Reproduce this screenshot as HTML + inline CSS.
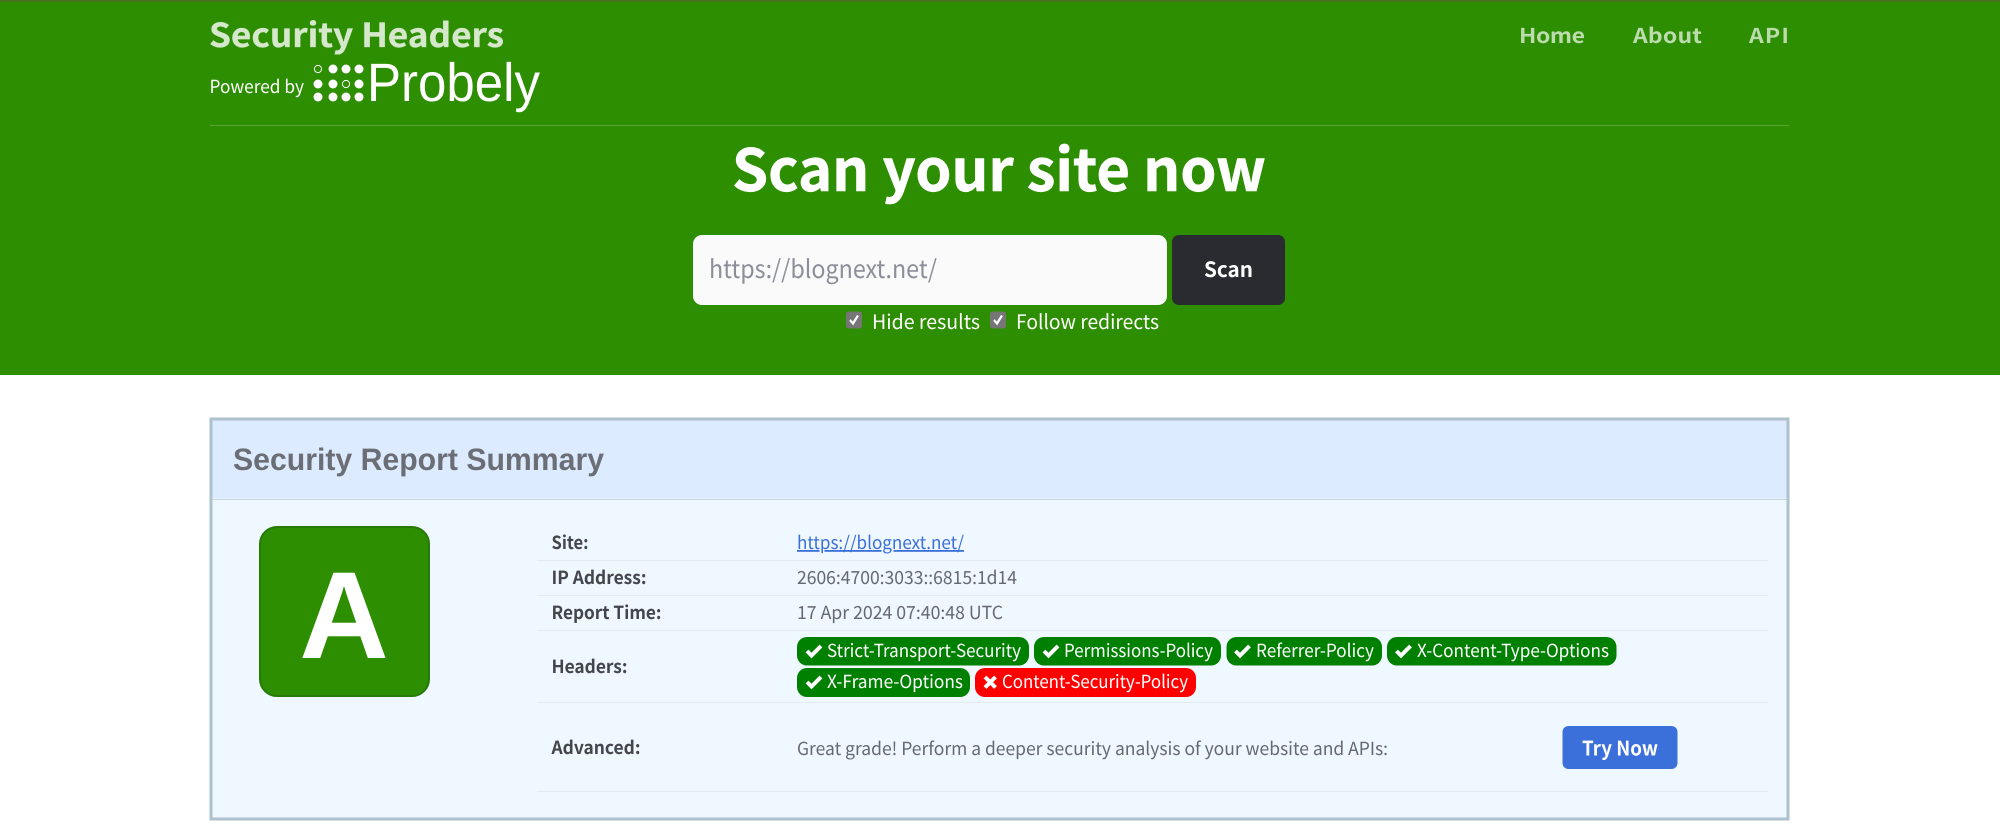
<!DOCTYPE html>
<html lang="en"><head><meta charset="utf-8"><title>Security Headers</title>
<style>
html,body{margin:0;padding:0;background:#fff;width:2000px;height:830px;overflow:hidden}
svg{display:block}
text{font-family:"Noto Sans CJK SC","Liberation Sans",sans-serif;text-rendering:geometricPrecision}
.b{font-weight:700}
.lab{font-size:18px;font-weight:700;fill:#44464c}
.val{font-size:18px;fill:#66696f}
.pill{font-size:18px;fill:#fff}
</style></head><body>
<svg width="2000" height="830" viewBox="0 0 2000 830" xmlns="http://www.w3.org/2000/svg">
<rect width="2000" height="375" fill="#2c8e00"/>
<rect width="2000" height="2" fill="#4a731f"/>
<text x="209" y="47" class="b" font-size="33" fill="#d5e8cc" stroke="#d5e8cc" stroke-width=".3" textLength="295" lengthAdjust="spacingAndGlyphs">Security Headers</text>
<text x="209.500" y="93" font-size="18" fill="#fff" textLength="94.500" lengthAdjust="spacingAndGlyphs">Powered by</text>
<g fill="#fff">
<circle cx="318" cy="69" r="3.6" fill="none" stroke="#fff" stroke-width="1"/><circle cx="333" cy="69" r="4.500"/><circle cx="346" cy="69" r="4.500"/><circle cx="359" cy="69" r="4.500"/>
<circle cx="318" cy="84" r="4.500"/><circle cx="333" cy="84" r="4.500"/><circle cx="346" cy="84" r="3.6" fill="none" stroke="#fff" stroke-width="1"/><circle cx="359" cy="84" r="4.500"/>
<circle cx="318" cy="97" r="4.500"/><circle cx="333" cy="97" r="4.500"/><circle cx="346" cy="97" r="4.500"/><circle cx="359" cy="97" r="4.500"/>
</g>
<text x="367" y="101" font-size="54" fill="#fff" style="font-family:'Liberation Sans',sans-serif" textLength="173" lengthAdjust="spacingAndGlyphs">Probely</text>
<g transform="translate(1519 43) scale(1.12 1)"><text class="b" font-size="20.500" fill="#bcdcae" textLength="58.900" lengthAdjust="spacing">Home</text></g>
<g transform="translate(1633 43) scale(1.12 1)"><text class="b" font-size="20.500" fill="#bcdcae" textLength="61.600" lengthAdjust="spacing">About</text></g>
<g transform="translate(1749 43) scale(1.12 1)"><text class="b" font-size="20.500" fill="#bcdcae" textLength="35.700" lengthAdjust="spacing">API</text></g>
<rect x="210" y="125" width="1579" height="1" fill="#56a533"/>
<text x="732" y="191" class="b" font-size="58" fill="#fff" stroke="#fff" stroke-width=".6" textLength="534" lengthAdjust="spacingAndGlyphs">Scan your site now</text>
<rect x="693" y="235" width="474" height="70" rx="9" fill="#fafafa"/>
<text x="709" y="278" font-size="25" fill="#8c8f99" textLength="228" lengthAdjust="spacingAndGlyphs">https://blognext.net/</text>
<rect x="1172" y="235" width="113" height="70" rx="7" fill="#2a2b30"/>
<text x="1204" y="277" class="b" font-size="21" fill="#fff" textLength="49" lengthAdjust="spacingAndGlyphs">Scan</text>
<rect x="846" y="311.500" width="16" height="17" rx="2.500" fill="#767676"/>
<path d="M850 320l3 3.500 5-8" fill="none" stroke="#fff" stroke-width="2.200"/>
<rect x="990" y="311.500" width="16" height="17" rx="2.500" fill="#767676"/>
<path d="M994 320l3 3.500 5-8" fill="none" stroke="#fff" stroke-width="2.200"/>
<text x="872" y="329" font-size="20" fill="#fff" textLength="108" lengthAdjust="spacingAndGlyphs">Hide results</text>
<text x="1016" y="329" font-size="20" fill="#fff" textLength="143" lengthAdjust="spacingAndGlyphs">Follow redirects</text>

<rect x="211" y="419" width="1577" height="400" fill="#eff7ff" stroke="#adc2cc" stroke-width="3"/>
<rect x="212.500" y="420.500" width="1574" height="78" fill="#dcebff"/>
<rect x="212.500" y="499" width="1574" height="1" fill="#c8d8e3"/>
<text x="233" y="470" font-size="31" font-weight="700" fill="#6b6e75" style="font-family:'Liberation Sans',sans-serif" textLength="371" lengthAdjust="spacingAndGlyphs">Security Report Summary</text>
<rect x="260" y="527" width="169" height="169" rx="17" fill="#2c8e00" stroke="#287a08" stroke-width="2"/>
<text x="344" y="658" text-anchor="middle" font-size="124" font-weight="700" fill="#fff" style="font-family:'Liberation Sans',sans-serif">A</text>

<g fill="#e3ebf2">
<rect x="537" y="560" width="1231" height="1"/>
<rect x="537" y="595" width="1231" height="1"/>
<rect x="537" y="630" width="1231" height="1"/>
<rect x="537" y="702" width="1231" height="1"/>
<rect x="537" y="791" width="1231" height="1"/>
</g>
<text x="551.500" y="549" class="lab" textLength="37" lengthAdjust="spacingAndGlyphs">Site:</text>
<text x="551.500" y="584" class="lab" textLength="95" lengthAdjust="spacingAndGlyphs">IP Address:</text>
<text x="551.500" y="619" class="lab" textLength="110" lengthAdjust="spacingAndGlyphs">Report Time:</text>
<text x="551.500" y="673" class="lab" textLength="76" lengthAdjust="spacingAndGlyphs">Headers:</text>
<text x="551.500" y="754" class="lab" textLength="89" lengthAdjust="spacingAndGlyphs">Advanced:</text>
<text x="797" y="549" font-size="18" fill="#3a6fd8" text-decoration="underline" textLength="167" lengthAdjust="spacingAndGlyphs">https://blognext.net/</text>
<text x="797" y="584" class="val" textLength="220" lengthAdjust="spacingAndGlyphs">2606:4700:3033::6815:1d14</text>
<text x="797" y="619" class="val" textLength="206" lengthAdjust="spacingAndGlyphs">17 Apr 2024 07:40:48 UTC</text>

<g fill="#008000">
<rect x="797" y="637" width="232" height="28.500" rx="10"/>
<rect x="1034" y="637" width="187" height="28.500" rx="10"/>
<rect x="1226.500" y="637" width="155.500" height="28.500" rx="10"/>
<rect x="1387" y="637" width="229.500" height="28.500" rx="10"/>
<rect x="797" y="668" width="173" height="29" rx="10"/>
</g>
<rect x="975" y="668" width="221" height="29" rx="10" fill="#f00"/>
<g fill="none" stroke="#fff" stroke-width="4">
<path d="M807 651l4.500 4.500 9.500-9.500"/>
<path d="M1044 651l4.500 4.500 9.500-9.500"/>
<path d="M1235.500 651l4.500 4.500 9.500-9.500"/>
<path d="M1396.500 651l4.500 4.500 9.500-9.500"/>
<path d="M807 682l4.500 4.500 9.500-9.500"/>
<path d="M985 677l10.500 10.500m0-10.500l-10.500 10.500"/>
</g>
<text x="827" y="657" class="pill" textLength="194" lengthAdjust="spacingAndGlyphs">Strict-Transport-Security</text>
<text x="1064" y="657" class="pill" textLength="149" lengthAdjust="spacingAndGlyphs">Permissions-Policy</text>
<text x="1256" y="657" class="pill" textLength="118" lengthAdjust="spacingAndGlyphs">Referrer-Policy</text>
<text x="1417" y="657" class="pill" textLength="192" lengthAdjust="spacingAndGlyphs">X-Content-Type-Options</text>
<text x="827" y="688" class="pill" textLength="136" lengthAdjust="spacingAndGlyphs">X-Frame-Options</text>
<text x="1002" y="688" class="pill" textLength="186" lengthAdjust="spacingAndGlyphs">Content-Security-Policy</text>

<text x="797" y="755" class="val" textLength="591" lengthAdjust="spacingAndGlyphs">Great grade! Perform a deeper security analysis of your website and APIs:</text>
<rect x="1562.500" y="726" width="115" height="43" rx="6" fill="#3b6fd9"/>
<text x="1582" y="755.500" class="b" font-size="20" fill="#fff" textLength="76" lengthAdjust="spacingAndGlyphs">Try Now</text>
</svg>
</body></html>
